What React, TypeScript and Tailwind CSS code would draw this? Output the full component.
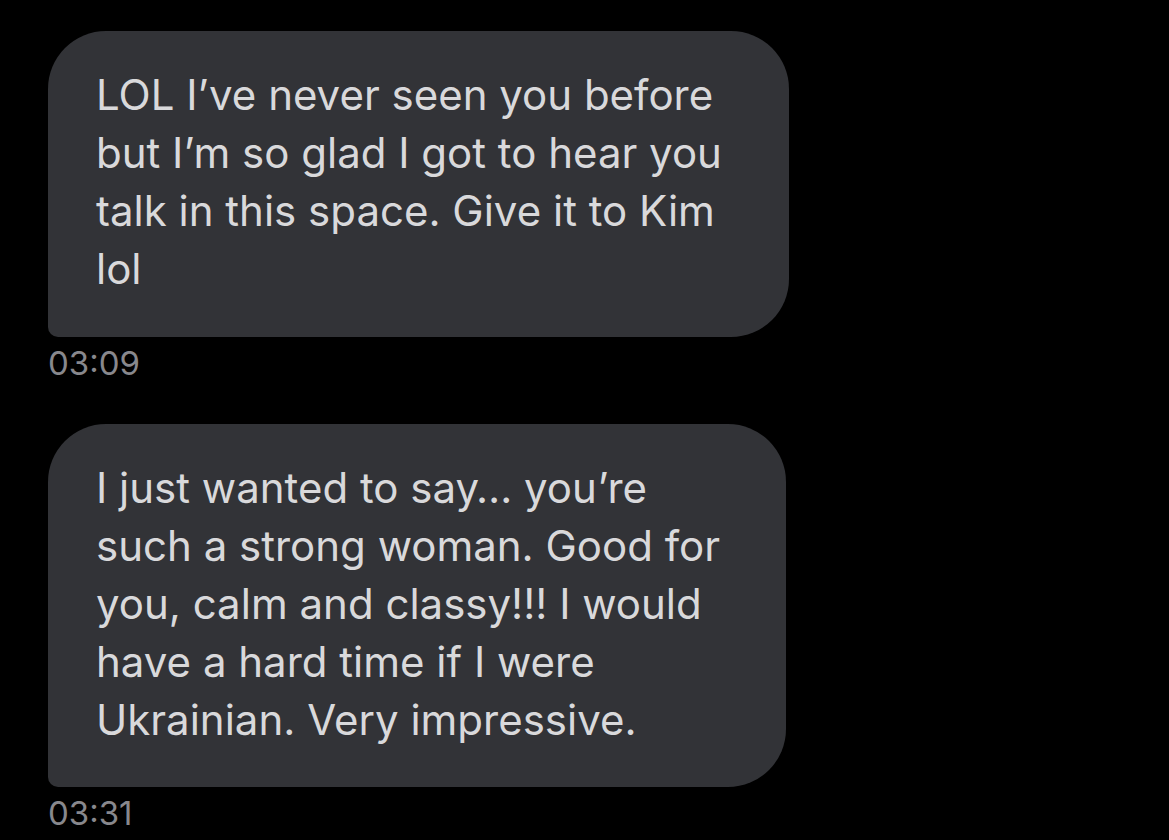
const font = { fontFamily: "Inter, 'Open Sans', sans-serif" };

function Bubble({ text, time, width, pad }: { text: string[]; time: string; width: string; pad: string }) {
  return (
    <div className="flex flex-col items-start">
      <div className={`${width} ${pad} bg-[#323337] rounded-[58px] rounded-bl-[10px] pl-[48px] pr-[40px]`}>
        {text.map((line, i) => (
          <div key={i} className="text-[42px] leading-[58px] text-[#d9d9db] whitespace-nowrap">
            {line}
          </div>
        ))}
      </div>
      <div className="mt-[6px] text-[33px] leading-[40px] text-[#88888d]">{time}</div>
    </div>
  );
}

export default function App() {
  return (
    <div style={font} className="w-full h-[840px] bg-black overflow-hidden pl-[48px] pt-[31px] flex flex-col gap-[41px]">
      <Bubble
        width="w-[741px]"
        pad="pt-[35px] pb-[39px]"
        time="03:09"
        text={[
          "LOL I’ve never seen you before",
          "but I’m so glad I got to hear you",
          "talk in this space. Give it to Kim",
          "lol",
        ]}
      />
      <Bubble
        width="w-[738px]"
        pad="pt-[35px] pb-[38px]"
        time="03:31"
        text={[
          "I just wanted to say… you’re",
          "such a strong woman. Good for",
          "you, calm and classy!!! I would",
          "have a hard time if I were",
          "Ukrainian. Very impressive.",
        ]}
      />
    </div>
  );
}
